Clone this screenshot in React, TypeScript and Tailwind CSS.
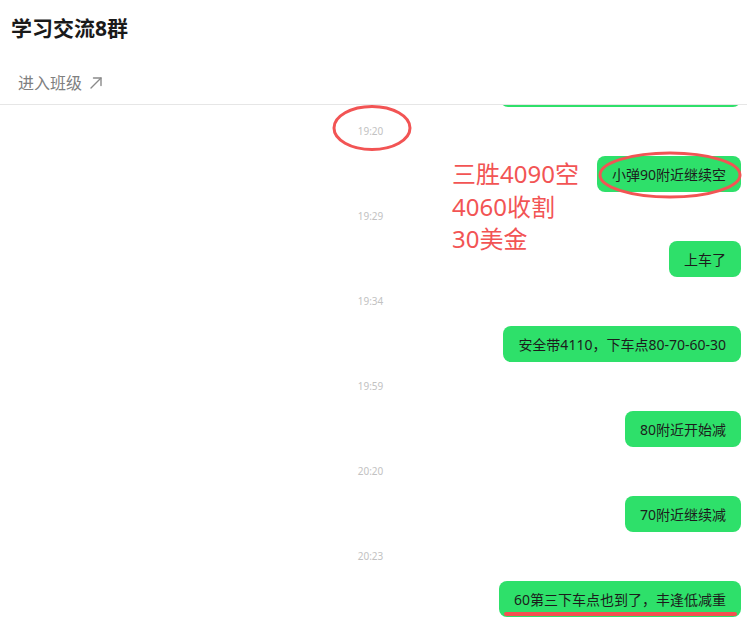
import * as React from "react"

const font = { fontFamily: '"Noto Sans", "Noto Sans CJK SC", sans-serif' }

type Msg = { time: string; text: string; underline?: boolean }

const messages: Msg[] = [
  { time: "19:20", text: "小弹90附近继续空" },
  { time: "19:29", text: "上车了" },
  { time: "19:34", text: "安全带4110，下车点80-70-60-30" },
  { time: "19:59", text: "80附近开始减" },
  { time: "20:20", text: "70附近继续减" },
  { time: "20:23", text: "60第三下车点也到了，丰逢低减重", underline: true },
]

function Bubble({ text, underline }: { text: string; underline?: boolean }) {
  return (
    <div className="flex justify-end">
      <div className="relative flex h-9 items-center rounded-[8px] bg-[#2ee06a] px-[15px] text-[14px] text-[#1c1c1c] whitespace-nowrap">
        {text}
        {underline && (
          <div className="absolute bottom-[1px] left-[5px] right-[4px] h-[4px] rounded-full bg-[#f25151]" />
        )}
      </div>
    </div>
  )
}

function ArrowOut() {
  return (
    <svg width="14" height="14" viewBox="0 0 14 14" fill="none" stroke="#8a8a8a" strokeWidth="1.4" strokeLinecap="round" strokeLinejoin="round">
      <path d="M2 12 L12 2" />
      <path d="M4.5 2 H12 V9.5" />
    </svg>
  )
}

export default function App() {
  return (
    <div className="relative flex h-[635px] w-[747px] flex-col overflow-hidden bg-white" style={font}>
      <div className="border-b border-[#e6e6e6]">
        <div className="flex h-[58px] items-center pl-[11px] text-[21px] font-bold text-[#1a1a1a]">
          学习交流8群
        </div>
        <div className="flex h-[46px] items-center gap-[7px] pl-[18px] pt-[3px] text-[16px] text-[#808080]">
          <span>进入班级</span>
          <ArrowOut />
        </div>
      </div>

      <div className="min-h-0 flex-1 overflow-hidden pr-[6px]">
        {/* previous message, scrolled almost out of view */}
        <div className="-mt-[34px] flex justify-end">
          <div className="h-9 w-[241px] rounded-[8px] bg-[#2ee06a]" />
        </div>
        {messages.map((m) => (
          <div key={m.time} className="pt-[17px]">
            <div className="flex h-[14px] items-center justify-center text-[10px] text-[#c2c2c2]">
              {m.time}
            </div>
            <div className="mt-[18px]">
              <Bubble text={m.text} underline={m.underline} />
            </div>
          </div>
        ))}
      </div>

      {/* red annotations drawn over the screenshot */}
      <svg className="pointer-events-none absolute left-0 top-0" width="747" height="635">
        <ellipse cx="372" cy="128" rx="38" ry="21.5" fill="none" stroke="#f25454" strokeWidth="3" />
        <ellipse cx="670" cy="175" rx="70" ry="22" fill="none" stroke="#f25454" strokeWidth="3" />
      </svg>
      <div className="pointer-events-none absolute left-[452px] top-[158px] text-[24px] leading-[32.5px] text-[#f25454]">
        <div>三胜4090空</div>
        <div>4060收割</div>
        <div>30美金</div>
      </div>
    </div>
  )
}
